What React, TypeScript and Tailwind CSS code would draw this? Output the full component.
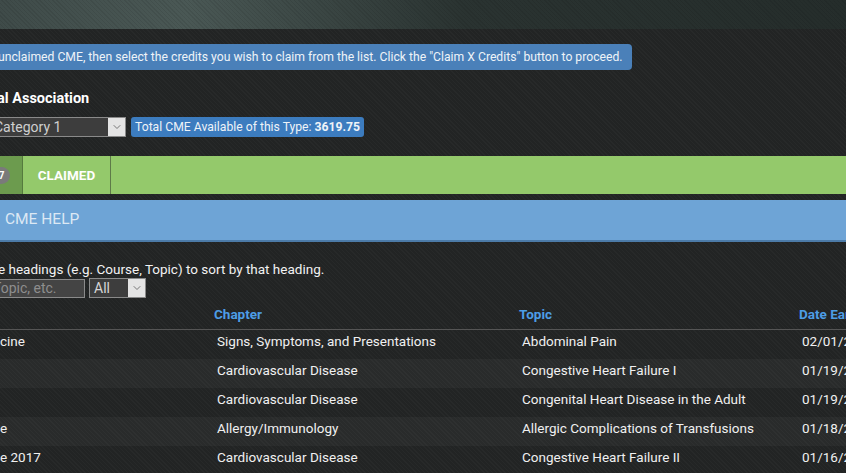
import { ChevronDown } from "lucide-react";

const rows = [
  { course: "cine", chapter: "Signs, Symptoms, and Presentations", topic: "Abdominal Pain", date: "02/01/2018" },
  { course: "", chapter: "Cardiovascular Disease", topic: "Congestive Heart Failure I", date: "01/19/2018" },
  { course: "", chapter: "Cardiovascular Disease", topic: "Congenital Heart Disease in the Adult", date: "01/19/2018" },
  { course: "e", chapter: "Allergy/Immunology", topic: "Allergic Complications of Transfusions", date: "01/18/2018" },
  { course: "e 2017", chapter: "Cardiovascular Disease", topic: "Congestive Heart Failure II", date: "01/16/2018" },
];

function SelectBox({ label, width, textClass }: { label: string; width: string; textClass: string }) {
  return (
    <div className={`flex h-[20px] border border-[#8a8a8a] bg-[#3d3d3d] ${width}`}>
      <div className={`flex-1 overflow-hidden whitespace-nowrap leading-[18px] ${textClass}`}>{label}</div>
      <div className="flex w-[17px] items-center justify-center bg-[#e4e4e4]">
        <ChevronDown size={12} strokeWidth={2} className="text-[#777]" />
      </div>
    </div>
  );
}

export default function App() {
  return (
    <div className="relative h-[473px] w-[846px] overflow-hidden bg-[#222424] font-['Roboto',sans-serif] text-[13.5px] text-white">
      <div className="pointer-events-none absolute inset-0 bg-[repeating-linear-gradient(45deg,rgba(255,255,255,0.025)_0px,rgba(255,255,255,0.025)_1px,transparent_1px,transparent_3px)]" />
      <div className="relative">
        {/* top header */}
        <div className="h-[29px] bg-[linear-gradient(90deg,#3f4b49_0%,#4a5855_22%,#2a3331_55%,#252d2b_100%)]">
          <div className="h-full bg-[repeating-linear-gradient(45deg,rgba(0,0,0,0.08)_0px,rgba(0,0,0,0.08)_1px,transparent_1px,transparent_3px)]" />
        </div>

        {/* info bar */}
        <div className="mt-[15px] flex">
          <div className="-ml-[10px] flex h-[26px] items-center rounded-[4px] bg-[#4a80b9] pl-[8px] pr-[9px] text-[12.2px] text-[#eef3f8]">
            unclaimed CME, then select the credits you wish to claim from the list. Click the "Claim X Credits" button to proceed.
          </div>
        </div>

        {/* association */}
        <div className="-ml-[3px] mt-[20px] text-[14.5px] font-bold leading-[18px]">al Association</div>

        <div className="mt-[9px] flex items-center gap-[5px]">
          <div className="-ml-[9px]">
            <SelectBox label="Category 1" width="w-[135px]" textClass="pl-[2px] text-[14px] text-[#cfcfcf]" />
          </div>
          <div className="flex h-[20px] items-center rounded-[3px] bg-[#3c7cbf] px-[4px] text-[12.2px] text-[#eef3f8]">
            Total CME Available of this Type:&nbsp;<span className="font-bold">3619.75</span>
          </div>
        </div>

        {/* tabs */}
        <div className="mt-[19px] flex h-[38px] bg-[#94c96b]">
          <div className="flex w-[23px] items-center border-r border-[#557a3e] bg-[#6c9b4e]">
            <div className="-ml-[7px] flex h-[17px] w-[17px] items-center justify-center rounded-full bg-[#7a7a7a] text-[10px] font-bold text-white">
              7
            </div>
          </div>
          <div className="flex w-[88px] items-center justify-center border-r border-[#5e7a48] text-[13.5px] font-bold text-white">
            CLAIMED
          </div>
        </div>

        {/* help bar */}
        <div className="mt-[6px] flex h-[42px] items-center border-b-2 border-[#4c7ba8] bg-[#6ea4d6] pl-[5px] text-[15.5px] text-[#dce8f4]">
          CME HELP
        </div>

        <div className="-ml-[2px] mt-[19px] leading-[16px] text-[#f2f2f2]">
          e headings (e.g. Course, Topic) to sort by that heading.
        </div>

        <div className="mt-[1px] flex items-center gap-[4px]">
          <div className="-ml-[10px] flex h-[19px] w-[95px] items-center border border-[#8a8a8a] bg-[#444] pl-[2px] text-[14px] text-[#8e8e8e]">
            Topic, etc.
          </div>
          <SelectBox label="All" width="w-[57px]" textClass="pl-[4px] text-[14px] text-[#d6d6d6]" />
        </div>

        {/* table */}
        <div className="mt-[3px] grid h-[29px] grid-cols-[214px_305px_280px_1fr] items-center border-b border-[#555] pb-[1px] font-bold text-[#4d9de6]">
          <div />
          <div>Chapter</div>
          <div>Topic</div>
          <div className="whitespace-nowrap">Date Earned</div>
        </div>
        {rows.map((r, i) => (
          <div
            key={i}
            className={`grid h-[29px] grid-cols-[217px_305px_280px_1fr] items-center whitespace-nowrap pb-[7px] text-[#f0f0f0] ${
              i % 2 === 1 ? "bg-[rgba(255,255,255,0.035)]" : ""
            }`}
          >
            <div>{r.course}</div>
            <div>{r.chapter}</div>
            <div>{r.topic}</div>
            <div>{r.date}</div>
          </div>
        ))}
      </div>
    </div>
  );
}
